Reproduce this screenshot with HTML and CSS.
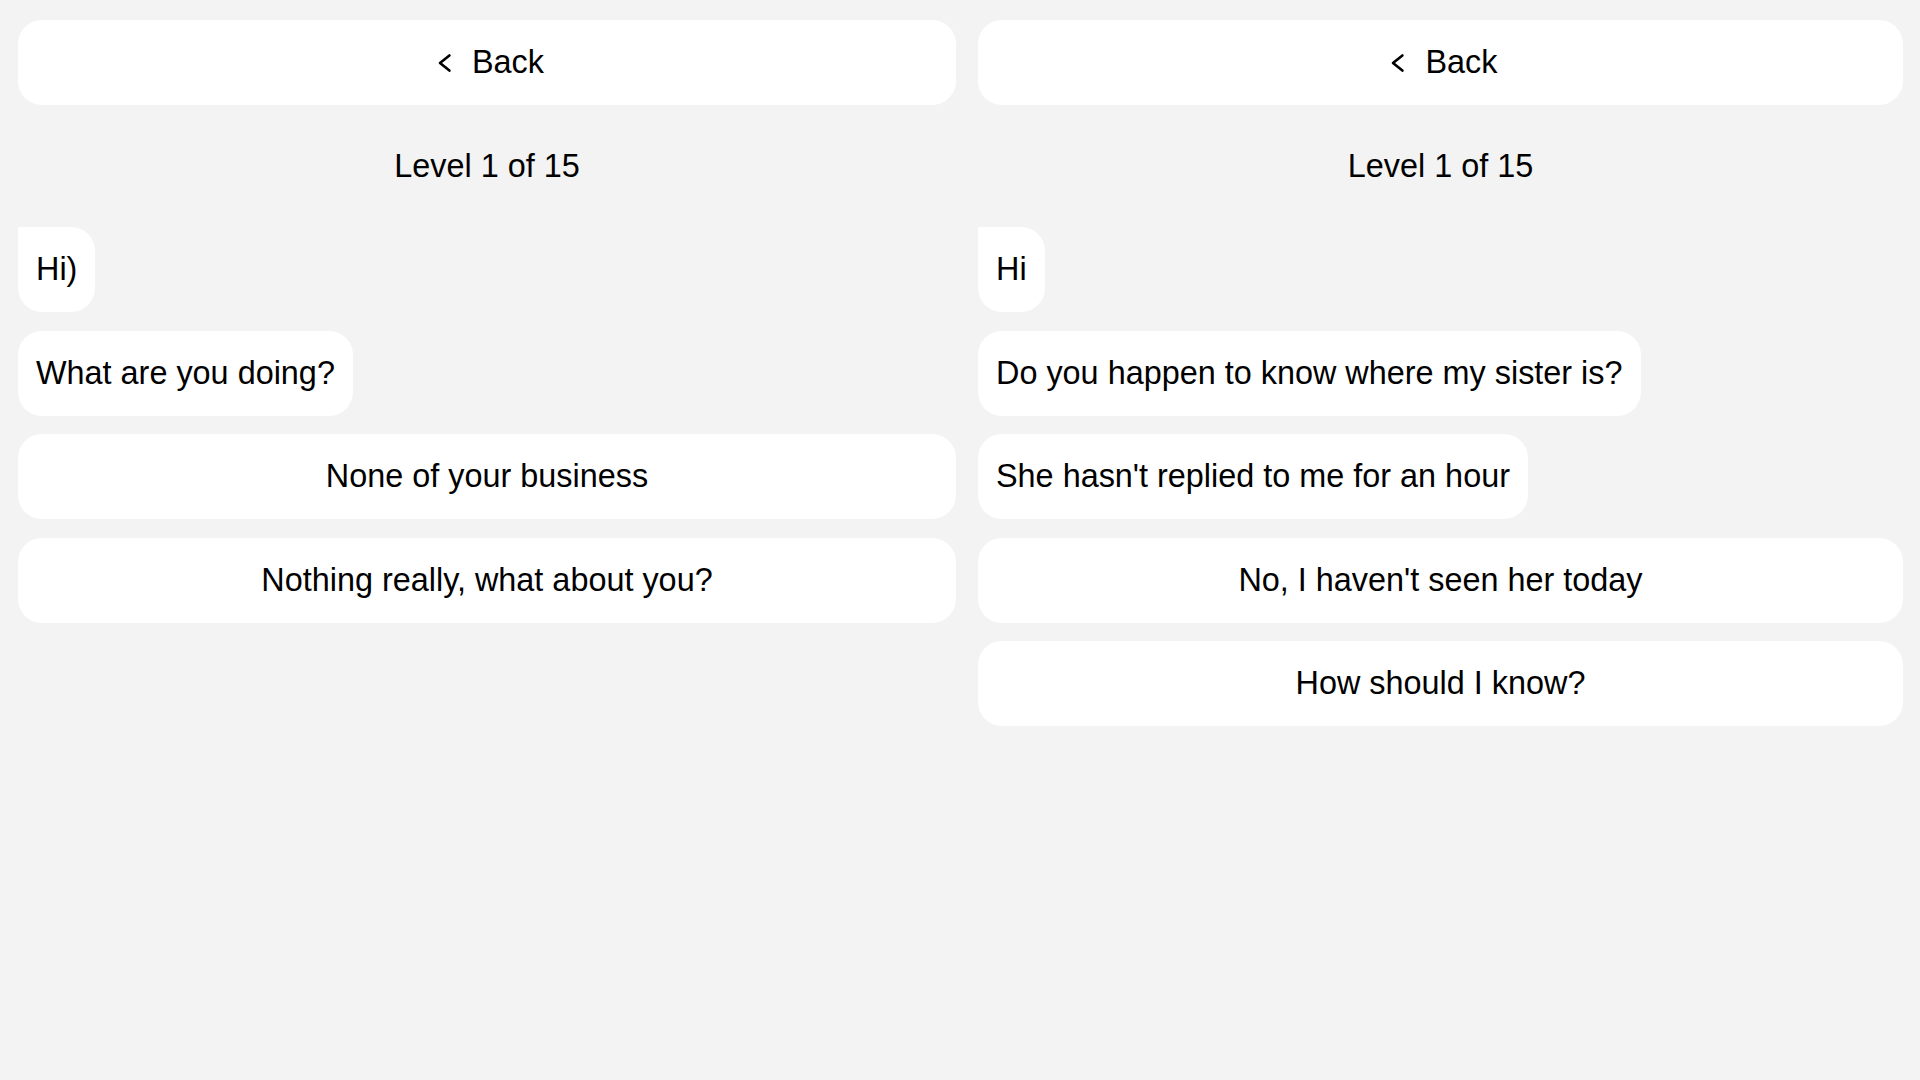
FILE: index.html
```html
<!DOCTYPE html>
<html lang="en">
<head>
    <meta charset="UTF-8">
    <meta name="viewport" content="width=device-width, initial-scale=1.0">
    <title>Chat Levels</title>
    <link rel="stylesheet" href="styles.css">
</head>
<body>
    <div class="screens">
        <div class="screen">
            <button class="back-button">
                <svg class="back-icon" width="28" height="28" viewBox="0 0 28 28"><polyline points="19.4,6.4 10,14 19.4,21.6" /></svg>
                <span>Back</span>
            </button>
            <div class="level">Level 1 of 15</div>
            <div class="bubble first">Hi)</div>
            <div class="bubble">What are you doing?</div>
            <button class="answer">None of your business</button>
            <button class="answer">Nothing really, what about you?</button>
        </div>

        <div class="screen">
            <button class="back-button">
                <svg class="back-icon" width="28" height="28" viewBox="0 0 28 28"><polyline points="19.4,6.4 10,14 19.4,21.6" /></svg>
                <span>Back</span>
            </button>
            <div class="level">Level 1 of 15</div>
            <div class="bubble first">Hi</div>
            <div class="bubble">Do you happen to know where my sister is?</div>
            <div class="bubble">She hasn't replied to me for an hour</div>
            <button class="answer">No, I haven't seen her today</button>
            <button class="answer">How should I know?</button>
        </div>
    </div>
</body>
</html>
```

FILE: styles.css
```css
body {
    margin: 0;
    background: #f3f3f3;
    font-family: "Liberation Sans", Arial, sans-serif;
    color: #000;
}
.screens {
    display: grid;
    grid-template-columns: 938px 925px;
    column-gap: 22px;
    padding: 20px 17px 20px 18px;
}
.screen {
    display: flex;
    flex-direction: column;
    align-items: flex-start;
    gap: 18.5px;
}
.back-button,
.answer {
    width: 100%;
    height: 85px;
    border: none;
    border-radius: 24px;
    background: #fff;
    font-family: inherit;
    font-size: 32.4px;
    color: #000;
    display: flex;
    align-items: center;
    justify-content: center;
    cursor: pointer;
    padding: 0 18px;
}
.back-button {
    gap: 14px;
}
.back-icon polyline {
    fill: none;
    stroke: #000;
    stroke-width: 2.6;
    stroke-linecap: round;
    stroke-linejoin: round;
}
.level {
    width: 100%;
    height: 85px;
    display: flex;
    align-items: center;
    justify-content: center;
    font-size: 32.4px;
}
.bubble {
    height: 85px;
    display: flex;
    align-items: center;
    padding: 0 18px;
    background: #fff;
    border-radius: 24px;
    font-size: 32.4px;
    box-sizing: border-box;
}
.bubble.first {
    border-top-left-radius: 0;
}
```
